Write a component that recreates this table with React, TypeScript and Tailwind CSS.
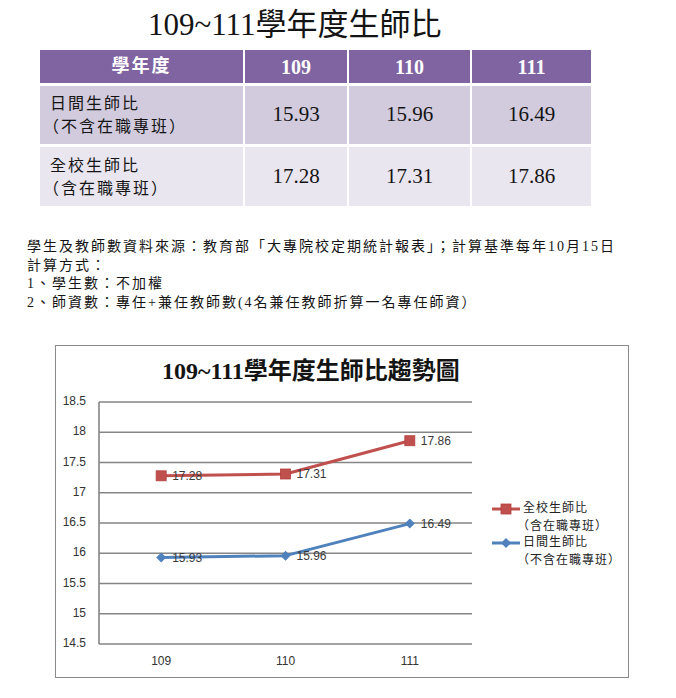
const years = ["109", "110", "111"];

const rows = [
  { label: ["日間生師比", "（不含在職專班）"], values: ["15.93", "15.96", "16.49"] },
  { label: ["全校生師比", "（含在職專班）"], values: ["17.28", "17.31", "17.86"] },
];

const notes = [
  "學生及教師數資料來源：教育部「大專院校定期統計報表」；計算基準每年10月15日",
  "計算方式：",
  "1、學生數：不加權",
  "2、師資數：專任+兼任教師數(4名兼任教師折算一名專任師資）",
];

const series = [
  {
    name: ["全校生師比", "（含在職專班）"],
    color: "#c0504d",
    marker: "square",
    values: [17.28, 17.31, 17.86],
  },
  {
    name: ["日間生師比", "（不含在職專班）"],
    color: "#4f81bd",
    marker: "diamond",
    values: [15.93, 15.96, 16.49],
  },
];

// plot geometry (svg coords)
const plotLeft = 43;
const plotRight = 416;
const plotTop = 12;
const step = 30.25; // px per 0.5
const ticks = [18.5, 18, 17.5, 17, 16.5, 16, 15.5, 15, 14.5];
const catX = (i: number) => plotLeft + ((plotRight - plotLeft) / 3) * (i + 0.5);
const valY = (v: number) => plotTop + ((18.5 - v) / 0.5) * step;

function Marker({ kind, x, y, color }: { kind: string; x: number; y: number; color: string }) {
  if (kind === "square") {
    return <rect x={x - 5} y={y - 5} width={10} height={10} fill={color} stroke="#b3403d" strokeWidth={0.8} />;
  }
  return <path d={`M${x} ${y - 5}L${x + 5} ${y}L${x} ${y + 5}L${x - 5} ${y}Z`} fill={color} />;
}

function TrendChart() {
  return (
    <svg width={572} height={287} className="block">
      {ticks.map((t, i) => (
        <g key={t}>
          <line
            x1={plotLeft}
            x2={plotRight}
            y1={plotTop + i * step}
            y2={plotTop + i * step}
            stroke="#858585"
            strokeWidth={1.6}
          />
          <text
            x={30}
            y={plotTop + i * step}
            textAnchor="end"
            dominantBaseline="middle"
            fontSize={12}
            fontFamily="Liberation Sans, Arial, sans-serif"
            fill="#333"
          >
            {t}
          </text>
        </g>
      ))}
      <line x1={plotLeft} x2={plotLeft} y1={plotTop} y2={plotTop + 8 * step} stroke="#858585" strokeWidth={1.6} />

      {years.map((y, i) => (
        <text
          key={y}
          x={catX(i)}
          y={272}
          textAnchor="middle"
          dominantBaseline="middle"
          fontSize={12}
          fontFamily="Liberation Sans, Arial, sans-serif"
          fill="#333"
        >
          {y}
        </text>
      ))}

      {series.map((s) => (
        <g key={s.color}>
          <polyline
            points={s.values.map((v, i) => `${catX(i)},${valY(v)}`).join(" ")}
            fill="none"
            stroke={s.color}
            strokeWidth={3}
            strokeLinejoin="round"
          />
          {s.values.map((v, i) => (
            <g key={i}>
              <Marker kind={s.marker} x={catX(i)} y={valY(v)} color={s.color} />
              <text
                x={catX(i) + 11}
                y={valY(v) + 1}
                dominantBaseline="middle"
                fontSize={12}
                fontFamily="Liberation Sans, Arial, sans-serif"
                fill="#3a3a3a"
              >
                {v.toFixed(2)}
              </text>
            </g>
          ))}
        </g>
      ))}

      {/* legend */}
      {series.map((s, k) => {
        const y = 119 + k * 34;
        return (
          <g key={s.color}>
            <line x1={436} x2={464} y1={y} y2={y} stroke={s.color} strokeWidth={3} />
            <Marker kind={s.marker} x={450} y={y} color={s.color} />
            <text
              x={467}
              y={y}
              dominantBaseline="middle"
              fontSize={12}
              letterSpacing={1}
              fontFamily="Noto Sans CJK TC, sans-serif"
              fill="#222"
            >
              {s.name[0]}
            </text>
            <text
              x={461}
              y={y + 17.5}
              dominantBaseline="middle"
              fontSize={12}
              letterSpacing={1}
              fontFamily="Noto Sans CJK TC, sans-serif"
              fill="#222"
            >
              {s.name[1]}
            </text>
          </g>
        );
      })}
    </svg>
  );
}

export default function App() {
  return (
    <div className="w-[676px] h-[698px] bg-white text-[#141414] font-['Liberation_Serif','Noto_Sans_CJK_TC',serif]">
      <div className="h-[50px] pt-[6px] pl-[148px] text-[31px] leading-[37px]">109~111學年度生師比</div>

      <div className="ml-[40px] grid grid-cols-[203px_102px_121px_119px] grid-rows-[33px_58px_59px] gap-x-[2px] gap-y-[3px] w-fit">
        <div className="bg-[#8064a2] flex items-center justify-center text-white text-[18px] font-bold tracking-[2px]">
          學年度
        </div>
        {years.map((y) => (
          <div key={y} className="bg-[#8064a2] flex items-center justify-center text-white text-[20px] font-bold">
            {y}
          </div>
        ))}
        {rows.map((r, ri) => {
          const bg = ri === 0 ? "bg-[#d1cbdd]" : "bg-[#e9e6ef]";
          return [
            <div key={`l${ri}`} className={`${bg} flex flex-col justify-center pl-[10px] text-[16px] leading-[23px] tracking-[2px]`}>
              <span>{r.label[0]}</span>
              <span className="-ml-[7px]">{r.label[1]}</span>
            </div>,
            ...r.values.map((v) => (
              <div key={v} className={`${bg} flex items-center justify-center text-[21px]`}>
                {v}
              </div>
            )),
          ];
        })}
      </div>

      <div className="mt-[32px] ml-[27px] text-[14px] leading-[18.5px] tracking-[2px]">
        {notes.map((n) => (
          <div key={n}>{n}</div>
        ))}
      </div>

      <div className="mt-[33px] ml-[55px] w-[574px] h-[333px] border border-[#8a8a8a]">
        <div className="h-[44px] pt-[6px] flex items-center pl-[106px] text-[24px] font-bold leading-none">
          109~111學年度生師比趨勢圖
        </div>
        <TrendChart />
      </div>
    </div>
  );
}
